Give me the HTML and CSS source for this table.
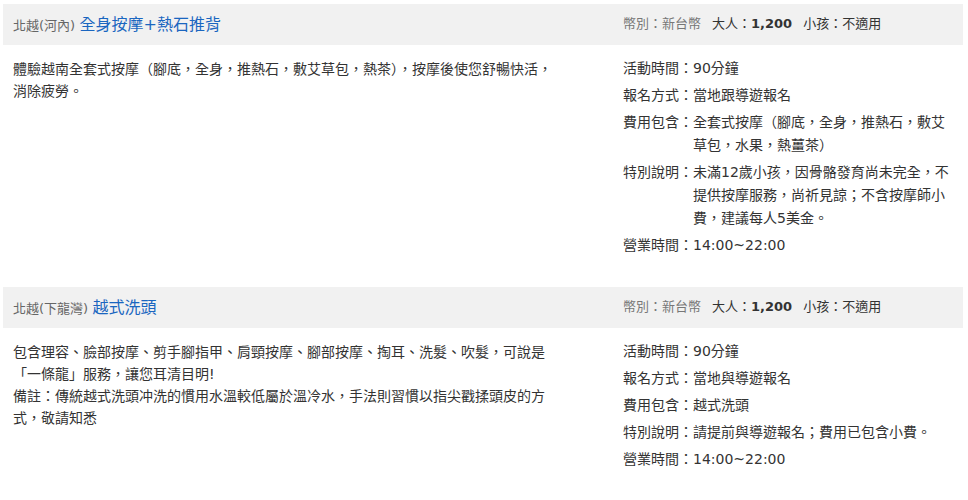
FILE: index.html
```html
<!DOCTYPE html>
<html lang="zh-Hant">
<head>
<meta charset="utf-8">
<link rel="stylesheet" href="styles.css">
</head>
<body>
<div class="wrap">
  <section class="item">
    <div class="head">
      <div class="head-left"><span class="area">北越(河內)</span> <span class="title">全身按摩+熱石推背</span></div>
      <div class="head-right"><span class="cur">幣別：新台幣</span><span class="price">大人：<b>1,200</b></span><span class="price">小孩：不適用</span></div>
    </div>
    <div class="body">
      <div class="desc">體驗越南全套式按摩（腳底，全身，推熱石，敷艾草包，熱茶），按摩後使您舒暢快活，<br>消除疲勞。</div>
      <ul class="info">
        <li><span class="label">活動時間：</span><span class="val">90分鐘</span></li>
        <li><span class="label">報名方式：</span><span class="val">當地跟導遊報名</span></li>
        <li><span class="label">費用包含：</span><span class="val">全套式按摩（腳底，全身，推熱石，敷艾<br>草包，水果，熱薑茶）</span></li>
        <li><span class="label">特別說明：</span><span class="val">未滿12歲小孩，因骨骼發育尚未完全，不<br>提供按摩服務，尚祈見諒；不含按摩師小<br>費，建議每人5美金。</span></li>
        <li><span class="label">營業時間：</span><span class="val">14:00~22:00</span></li>
      </ul>
    </div>
  </section>
  <section class="item">
    <div class="head">
      <div class="head-left"><span class="area">北越(下龍灣)</span> <span class="title">越式洗頭</span></div>
      <div class="head-right"><span class="cur">幣別：新台幣</span><span class="price">大人：<b>1,200</b></span><span class="price">小孩：不適用</span></div>
    </div>
    <div class="body">
      <div class="desc">包含理容、臉部按摩、剪手腳指甲、肩頸按摩、腳部按摩、掏耳、洗髮、吹髮，可說是<br>「一條龍」服務，讓您耳清目明!<br>備註：傳統越式洗頭冲洗的慣用水溫較低屬於溫冷水，手法則習慣以指尖戳揉頭皮的方<br>式，敬請知悉</div>
      <ul class="info">
        <li><span class="label">活動時間：</span><span class="val">90分鐘</span></li>
        <li><span class="label">報名方式：</span><span class="val">當地與導遊報名</span></li>
        <li><span class="label">費用包含：</span><span class="val">越式洗頭</span></li>
        <li><span class="label">特別說明：</span><span class="val">請提前與導遊報名；費用已包含小費。</span></li>
        <li><span class="label">營業時間：</span><span class="val">14:00~22:00</span></li>
      </ul>
    </div>
  </section>
</div>
</body>
</html>
```

FILE: styles.css
```css
html, body {
  margin: 0;
  padding: 0;
  background: #fff;
}
body {
  font-family: "DejaVu Sans", "Noto Sans CJK TC", sans-serif;
  color: #333;
  font-size: 14px;
}
.wrap {
  padding: 4px 5px 0 3px;
}
.item {
  margin-bottom: 30px;
}
.head {
  box-sizing: border-box;
  display: flex;
  align-items: center;
  height: 41px;
  background: #f1f1f1;
  padding: 0 0 4px 10px;
}
.head-left {
  flex: 0 0 610px;
  white-space: nowrap;
}
.area {
  font-size: 13px;
  color: #666;
}
.title {
  font-size: 16px;
  color: #1a66c0;
}
.head-right {
  display: flex;
  gap: 11px;
  font-size: 13px;
  white-space: nowrap;
}
.cur {
  color: #777;
}
.price {
  color: #333;
}
.price b {
  font-weight: bold;
}
.body {
  display: flex;
  padding: 12px 0 0 10px;
}
.desc {
  flex: 0 0 610px;
  line-height: 22px;
  margin-top: 1px;
  white-space: nowrap;
}
.info {
  list-style: none;
  margin: 0;
  padding: 0;
  display: flex;
  flex-direction: column;
  gap: 4px;
}
.info li {
  display: flex;
  line-height: 23px;
}
.label {
  flex: 0 0 70px;
  white-space: nowrap;
}
.val {
  white-space: nowrap;
}
```
